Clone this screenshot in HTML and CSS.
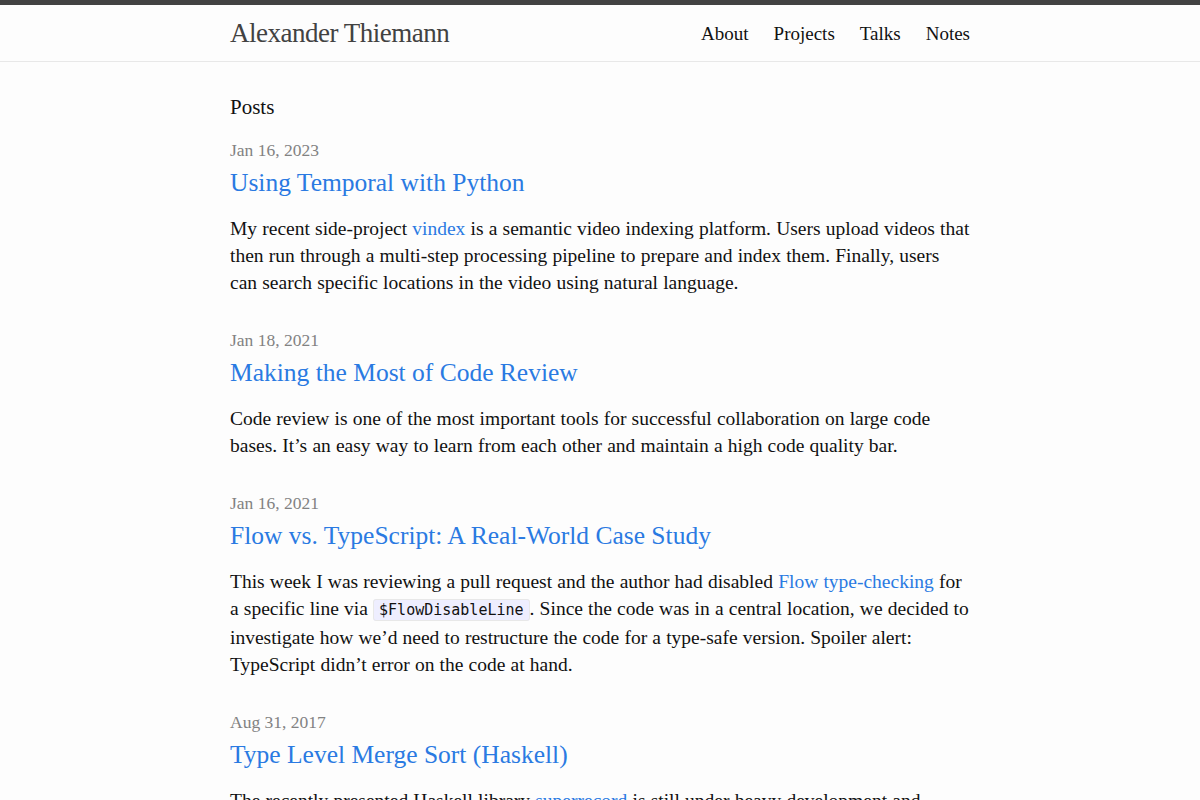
FILE: index.html
```html
<!DOCTYPE html>
<html lang="en">
<head>
    <meta charset="UTF-8">
    <meta name="viewport" content="width=device-width, initial-scale=1.0">
    <title>Alexander Thiemann</title>
    <link rel="stylesheet" href="styles.css">
</head>
<body>

<header class="site-header">
    <div class="wrapper header-row">
        <a class="site-title" href="#">Alexander Thiemann</a>
        <nav class="site-nav">
            <a class="page-link" href="#">About</a>
            <a class="page-link" href="#">Projects</a>
            <a class="page-link" href="#">Talks</a>
            <a class="page-link" href="#">Notes</a>
        </nav>
    </div>
</header>

<main class="page-content">
    <div class="wrapper">
        <h2 class="post-list-heading">Posts</h2>
        <ul class="post-list">
            <li>
                <span class="post-meta">Jan 16, 2023</span>
                <h3><a class="post-link" href="#">Using Temporal with Python</a></h3>
                <p>My recent side-project <a href="#">vindex</a> is a semantic video indexing platform. Users upload videos that then run through a multi-step processing pipeline to prepare and index them. Finally, users can search specific locations in the video using natural language.</p>
            </li>
            <li>
                <span class="post-meta">Jan 18, 2021</span>
                <h3><a class="post-link" href="#">Making the Most of Code Review</a></h3>
                <p>Code review is one of the most important tools for successful collaboration on large code bases. It’s an easy way to learn from each other and maintain a high code quality bar.</p>
            </li>
            <li>
                <span class="post-meta">Jan 16, 2021</span>
                <h3><a class="post-link" href="#">Flow vs. TypeScript: A Real-World Case Study</a></h3>
                <p>This week I was reviewing a pull request and the author had disabled <a href="#">Flow type-checking</a> for a specific line via <code>$FlowDisableLine</code>. Since the code was in a central location, we decided to investigate how we’d need to restructure the code for a type-safe version. Spoiler alert: TypeScript didn’t error on the code at hand.</p>
            </li>
            <li>
                <span class="post-meta">Aug 31, 2017</span>
                <h3><a class="post-link" href="#">Type Level Merge Sort (Haskell)</a></h3>
                <p>The recently presented Haskell library <a href="#">superrecord</a> is still under heavy development and making use of type level programming to provide records with fast field access and polymorphism.</p>
            </li>
        </ul>
    </div>
</main>

</body>
</html>
```

FILE: styles.css
```css
body {
    margin: 0;
    background: #fdfdfd;
    color: #111;
    font-family: "Liberation Serif", serif;
    font-size: 19.5px;
    line-height: 27px;
}
a { color: #2a7ae2; text-decoration: none; }

.wrapper {
    max-width: 740px;
    margin: 0 auto;
}

.site-header {
    border-top: 5px solid #424242;
    border-bottom: 1px solid #e8e8e8;
}
.header-row {
    display: flex;
    justify-content: space-between;
    align-items: center;
    height: 56px;
    padding-top: 1px;
    box-sizing: border-box;
}
.site-title {
    font-size: 27px;
    line-height: 55px;
    letter-spacing: -0.5px;
    color: #424242;
}
.site-nav { display: flex; gap: 25px; }
.page-link {
    color: #111;
    font-size: 19px;
    line-height: 55px;
}

.page-content { padding: 29px 0 30px; }
.post-list-heading {
    font-size: 21px;
    font-weight: normal;
    line-height: 32px;
    margin: 0 0 14px;
}
.post-list {
    list-style: none;
    margin: 0;
    padding: 0;
}
.post-list li { margin-bottom: 31px; }
.post-meta {
    display: block;
    font-size: 17.5px;
    color: #828282;
}
.post-list h3 {
    margin: 2px 0 15px;
    font-size: 25.5px;
    font-weight: normal;
    line-height: 34px;
}
.post-list p {
    margin: 0 0 15px;
    word-spacing: 0.3px;
}

code {
    font-family: "DejaVu Sans Mono", monospace;
    font-size: 15px;
    background: #eef;
    border: 1px solid #e8e8e8;
    border-radius: 3px;
    padding: 1px 5px;
}
```
